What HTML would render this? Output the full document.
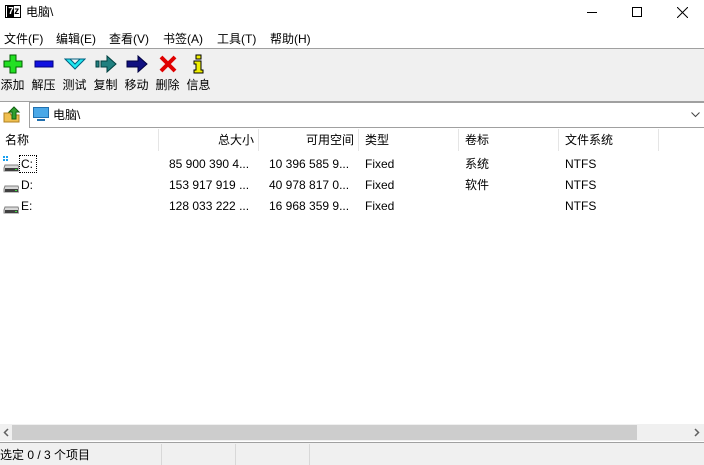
<!DOCTYPE html>
<html><head><meta charset="utf-8">
<style>
*{margin:0;padding:0;box-sizing:border-box}
body{width:704px;height:465px;overflow:hidden;background:#fff;font-family:"Liberation Sans","Noto Sans CJK SC",sans-serif;font-size:12px;color:#000;position:relative}
.abs{position:absolute}
.menu span{position:absolute;top:30px;font-size:12px}
.tb{position:absolute;top:48px;left:0;width:704px;height:54px;background:#f0f0f0;border-top:1px solid #a0a0a0;border-bottom:1px solid #a0a0a0}
.btn{position:absolute;top:0;text-align:center;width:31px}
.btn svg{display:block;margin:5px auto 0}
.btn span{display:block;font-size:12px;margin-top:2px;white-space:nowrap}
.hdr{position:absolute;top:129px;height:22px;font-size:12px;line-height:22px;color:#000}
.sep{position:absolute;top:129px;width:1px;height:22px;background:#e5e5e5}
.cell{position:absolute;font-size:12px;line-height:21px;height:21px;white-space:nowrap}
</style></head><body>
<!-- title -->
<div class="abs" style="left:5px;top:5px;width:16px;height:13px;border:1px solid #000;font:bold 10px 'Liberation Sans';line-height:11px;text-align:center;letter-spacing:-0.5px"><span style="background:#000;color:#fff;padding:0 1px">7</span>z</div>
<div class="abs" style="left:26px;top:3px;font-size:12px;line-height:18px">电脑\</div>
<div class="abs" style="left:587px;top:12px;width:10px;height:1px;background:#000"></div>
<div class="abs" style="left:632px;top:7px;width:10px;height:10px;border:1px solid #000"></div>
<svg class="abs" style="left:677px;top:7px" width="11" height="11"><path d="M0 0L11 11M11 0L0 11" stroke="#000" stroke-width="1"/></svg>
<!-- menu -->
<div class="menu"><span style="left:4px">文件(F)</span><span style="left:56px">编辑(E)</span><span style="left:109px">查看(V)</span><span style="left:163px">书签(A)</span><span style="left:217px">工具(T)</span><span style="left:270px">帮助(H)</span></div>
<!-- toolbar -->
<div class="tb">
<div class="btn" style="left:-3px"><svg width="20" height="20"><path d="M7 1h6v6h6v6h-6v6h-6v-6h-6v-6h6z" fill="#22e022" stroke="#006000"/></svg><span>添加</span></div>
<div class="btn" style="left:28px"><svg width="20" height="20"><rect x="1" y="7" width="18" height="6" fill="#1010e0" stroke="#000080"/></svg><span>解压</span></div>
<div class="btn" style="left:59px"><svg width="22" height="20"><path d="M1 5h20l-10 10z M6 5l5 5 5-5" fill="#20e8f0" stroke="#006080"/></svg><span>测试</span></div>
<div class="btn" style="left:90px"><svg width="22" height="20"><path d="M1 7h3v6h-3z M6 7h6v-5l9 8-9 8v-5h-6z" fill="#208080" stroke="#004040"/></svg><span>复制</span></div>
<div class="btn" style="left:121px"><svg width="22" height="20"><path d="M1 7h11v-5l9 8-9 8v-5h-11z" fill="#101080" stroke="#000040"/></svg><span>移动</span></div>
<div class="btn" style="left:152px"><svg width="20" height="20"><path d="M3 3L17 17M17 3L3 17" stroke="#e00000" stroke-width="4"/></svg><span>删除</span></div>
<div class="btn" style="left:183px"><svg width="20" height="20"><rect x="7" y="1" width="5" height="4" fill="#f0f000" stroke="#000"/><path d="M5 7h7v9h2v3h-9v-3h2v-6h-2z" fill="#f0f000" stroke="#000"/></svg><span>信息</span></div>
</div>
<!-- address -->
<svg class="abs" style="left:3px;top:105px" width="18" height="18"><path d="M1 8h6l1 2h8v7h-15z" fill="#f0c050" stroke="#b08020"/><path d="M9 14v-7h-3l5-5 5 5h-3v7z" fill="#30a030" stroke="#106010"/></svg>
<div class="abs" style="left:29px;top:102px;width:675px;height:26px;background:#fff;border:1px solid #a0a0a0;border-right:none"></div>
<svg class="abs" style="left:33px;top:107px" width="16" height="14"><rect x="0.5" y="0.5" width="15" height="10" fill="#4aa8e8" stroke="#2070b0"/><rect x="4" y="12" width="8" height="2" fill="#2070b0"/></svg>
<div class="abs" style="left:53px;top:106px;line-height:18px">电脑\</div>
<svg class="abs" style="left:691px;top:112px" width="9" height="6"><path d="M0.5 0.5L4.5 4.5 8.5 0.5" stroke="#444" fill="none"/></svg>
<!-- header -->
<div class="hdr" style="left:5px">名称</div>
<div class="hdr" style="left:158px;width:96px;text-align:right">总大小</div>
<div class="hdr" style="left:258px;width:96px;text-align:right">可用空间</div>
<div class="hdr" style="left:365px">类型</div>
<div class="hdr" style="left:465px">卷标</div>
<div class="hdr" style="left:565px">文件系统</div>
<div class="sep" style="left:158px"></div><div class="sep" style="left:258px"></div><div class="sep" style="left:358px"></div><div class="sep" style="left:458px"></div><div class="sep" style="left:558px"></div><div class="sep" style="left:658px"></div>
<!-- rows -->
<svg class="abs" style="left:3px;top:156px" width="16" height="16"><rect x="0" y="0" width="2" height="2" fill="#1aa0f0"/><rect x="3" y="0" width="2" height="2" fill="#1aa0f0"/><rect x="0" y="3" width="2" height="2" fill="#1aa0f0"/><rect x="3" y="3" width="2" height="2" fill="#1aa0f0"/><path d="M2 9h13l1 3v3h-15v-3z" fill="#d8d8d8" stroke="#808080"/><rect x="2" y="12" width="13" height="3" fill="#404040"/><rect x="12" y="13" width="2" height="1" fill="#40e040"/></svg>
<div class="abs" style="left:19px;top:155px;width:18px;height:18px;border:1px dotted #000"></div>
<div class="cell" style="left:21px;top:154px">C:</div>
<div class="cell" style="left:169px;top:154px">85 900 390 4...</div><div class="cell" style="left:269px;top:154px">10 396 585 9...</div><div class="cell" style="left:365px;top:154px">Fixed</div><div class="cell" style="left:465px;top:154px">系统</div><div class="cell" style="left:565px;top:154px">NTFS</div>
<svg class="abs" style="left:3px;top:177px" width="16" height="16"><path d="M2 9h13l1 3v3h-15v-3z" fill="#d8d8d8" stroke="#808080"/><rect x="2" y="12" width="13" height="3" fill="#404040"/><rect x="12" y="13" width="2" height="1" fill="#40e040"/></svg>
<div class="cell" style="left:21px;top:175px">D:</div>
<div class="cell" style="left:169px;top:175px">153 917 919 ...</div><div class="cell" style="left:269px;top:175px">40 978 817 0...</div><div class="cell" style="left:365px;top:175px">Fixed</div><div class="cell" style="left:465px;top:175px">软件</div><div class="cell" style="left:565px;top:175px">NTFS</div>
<svg class="abs" style="left:3px;top:198px" width="16" height="16"><path d="M2 9h13l1 3v3h-15v-3z" fill="#d8d8d8" stroke="#808080"/><rect x="2" y="12" width="13" height="3" fill="#404040"/><rect x="12" y="13" width="2" height="1" fill="#40e040"/></svg>
<div class="cell" style="left:21px;top:196px">E:</div>
<div class="cell" style="left:169px;top:196px">128 033 222 ...</div><div class="cell" style="left:269px;top:196px">16 968 359 9...</div><div class="cell" style="left:365px;top:196px">Fixed</div><div class="cell" style="left:565px;top:196px">NTFS</div>
<!-- scrollbar -->
<div class="abs" style="left:0;top:424px;width:704px;height:17px;background:#f0f0f0"></div>
<div class="abs" style="left:12px;top:425px;width:625px;height:15px;background:#cdcdcd"></div>
<svg class="abs" style="left:3px;top:428px" width="6" height="9"><path d="M5 1L1.5 4.5 5 8" stroke="#606060" stroke-width="1.5" fill="none"/></svg>
<svg class="abs" style="left:694px;top:428px" width="6" height="9"><path d="M1 1L4.5 4.5 1 8" stroke="#606060" stroke-width="1.5" fill="none"/></svg>
<!-- status -->
<div class="abs" style="left:0;top:442px;width:704px;height:23px;background:#f0f0f0;border-top:1px solid #a0a0a0"></div>
<div class="abs" style="left:161px;top:444px;width:1px;height:21px;background:#d8d8d8"></div>
<div class="abs" style="left:235px;top:444px;width:1px;height:21px;background:#d8d8d8"></div>
<div class="abs" style="left:309px;top:444px;width:1px;height:21px;background:#d8d8d8"></div>
<div class="abs" style="left:0;top:446px;line-height:18px">选定 0 / 3 个项目</div>
</body></html>
